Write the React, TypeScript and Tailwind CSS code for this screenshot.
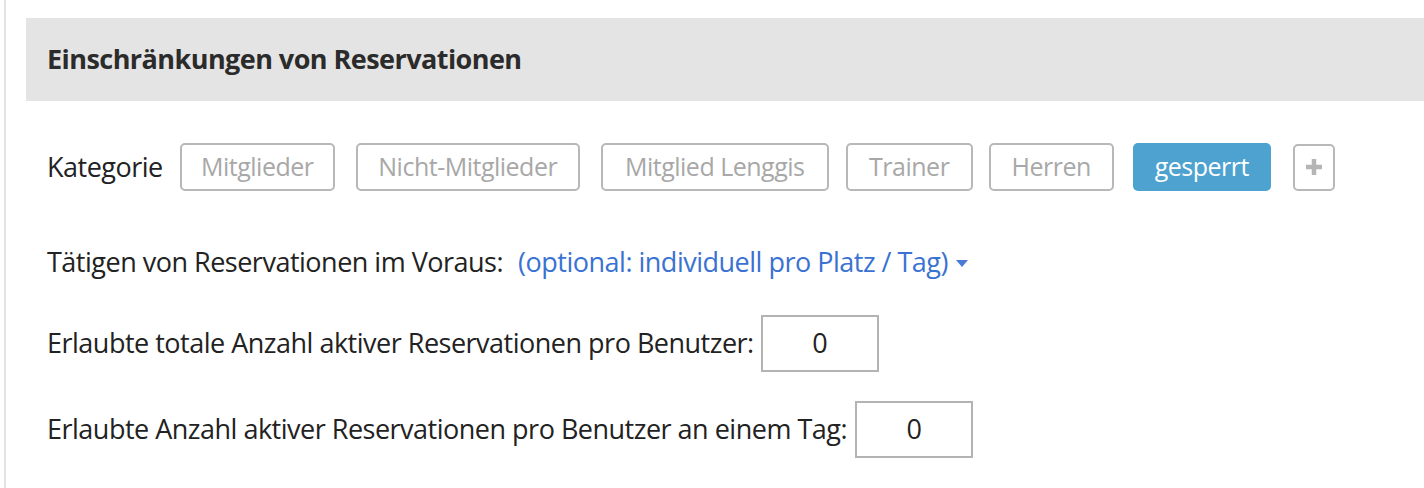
import React from "react";

const cats: { label: string; w: string; mr: string }[] = [
  { label: "Mitglieder", w: "w-[155px]", mr: "mr-[21px]" },
  { label: "Nicht-Mitglieder", w: "w-[224px]", mr: "mr-[21px]" },
  { label: "Mitglied Lenggis", w: "w-[228px]", mr: "mr-[17px]" },
  { label: "Trainer", w: "w-[127px]", mr: "mr-[16px]" },
  { label: "Herren", w: "w-[125px]", mr: "mr-[19px]" },
];

export default function App() {
  return (
    <div className="w-[1424px] h-[488px] bg-white overflow-hidden flex" style={{ fontFamily: '"Open Sans", sans-serif' }}>
      <div className="w-[4px] shrink-0" />
      <div className="w-[2px] shrink-0 bg-[#e3e3e3]" />
      <div className="flex-1 pl-[20px] pt-[18px] text-[27px] tracking-[-0.5px]">
        <div className="h-[83px] bg-[#e4e4e4] flex items-center pl-[21px]">
          <h2 className="text-[27px] font-bold text-[#2b2b2b] tracking-[-0.55px]">Einschränkungen von Reservationen</h2>
        </div>
        <div className="pl-[21px]">
          <div className="flex items-center mt-[42px] h-[48px]">
            <span className="text-[#222] mr-[17px]">Kategorie</span>
            {cats.map((c) => (
              <span
                key={c.label}
                className={`${c.w} ${c.mr} h-[48px] shrink-0 flex items-center justify-center border-2 border-[#b8b8b8] rounded-[5px] text-[25px] text-[#a8a8a8]`}
              >
                {c.label}
              </span>
            ))}
            <span className="w-[138px] h-[48px] shrink-0 flex items-center justify-center rounded-[5px] bg-[#4ea2cf] text-[25px] text-white mr-[22px]">gesperrt</span>
            <span className="w-[42px] h-[47px] shrink-0 flex items-center justify-center border-2 border-[#b8b8b8] rounded-[5px]">
              <svg width="18" height="18" viewBox="0 0 18 18">
                <path d="M9 1v16M1 9h16" stroke="#b5b5b5" strokeWidth="4.5" />
              </svg>
            </span>
          </div>
          <div className="flex items-center mt-[52px] h-[38px]">
            <span className="text-[#222]">Tätigen von Reservationen im Voraus:</span>
            <span className="text-[#3a72d2] ml-[15px]">(optional: individuell pro Platz / Tag)</span>
            <svg className="ml-[8px] mt-[4px]" width="12" height="8" viewBox="0 0 12 8">
              <path d="M0 0h12L6 7z" fill="#4a7ad6" />
            </svg>
          </div>
          <div className="flex items-center mt-[34px]">
            <span className="text-[#222] mr-[7px]">Erlaubte totale Anzahl aktiver Reservationen pro Benutzer:</span>
            <span className="w-[118px] h-[57px] border-2 border-[#b3b3b3] flex items-center justify-center text-[#222]">0</span>
          </div>
          <div className="flex items-center mt-[29px]">
            <span className="text-[#222] mr-[8px]">Erlaubte Anzahl aktiver Reservationen pro Benutzer an einem Tag:</span>
            <span className="w-[118px] h-[57px] border-2 border-[#b3b3b3] flex items-center justify-center text-[#222]">0</span>
          </div>
        </div>
      </div>
    </div>
  );
}
